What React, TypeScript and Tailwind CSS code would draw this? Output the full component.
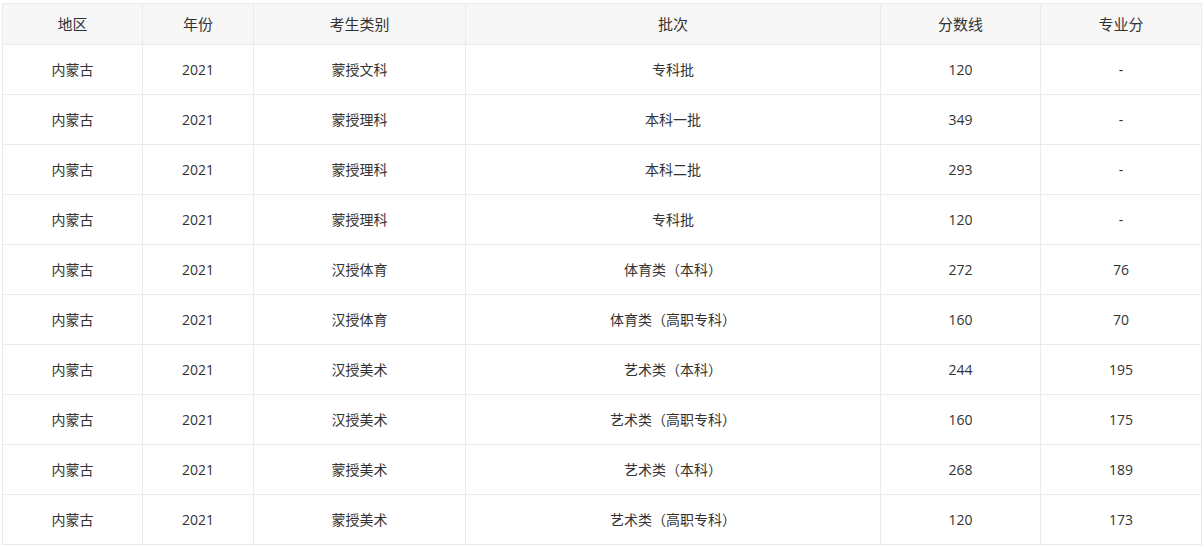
import React from 'react';

const rows = [
  ['内蒙古', '2021', '蒙授文科', '专科批', '120', '-'],
  ['内蒙古', '2021', '蒙授理科', '本科一批', '349', '-'],
  ['内蒙古', '2021', '蒙授理科', '本科二批', '293', '-'],
  ['内蒙古', '2021', '蒙授理科', '专科批', '120', '-'],
  ['内蒙古', '2021', '汉授体育', '体育类（本科）', '272', '76'],
  ['内蒙古', '2021', '汉授体育', '体育类（高职专科）', '160', '70'],
  ['内蒙古', '2021', '汉授美术', '艺术类（本科）', '244', '195'],
  ['内蒙古', '2021', '汉授美术', '艺术类（高职专科）', '160', '175'],
  ['内蒙古', '2021', '蒙授美术', '艺术类（本科）', '268', '189'],
  ['内蒙古', '2021', '蒙授美术', '艺术类（高职专科）', '120', '173'],
];

const headers = ['地区', '年份', '考生类别', '批次', '分数线', '专业分'];
const widths = ['w-[140px]', 'w-[111px]', 'w-[212px]', 'w-[415px]', 'w-[160px]', 'w-[161px]'];

export default function App() {
  return (
    <div className="bg-white pl-[2px] pt-[3px] font-['Open_Sans','Noto_Sans_CJK_SC',sans-serif] text-[#333]">
      <table className="w-[1200px] table-fixed border-collapse">
        <colgroup>
          {widths.map((w, i) => (
            <col key={i} className={w} />
          ))}
        </colgroup>
        <thead>
          <tr className="h-[41px] bg-[#f7f7f7]">
            {headers.map((h) => (
              <th key={h} className="border border-[#ebebeb] text-center text-[15px] font-normal leading-none">
                {h}
              </th>
            ))}
          </tr>
        </thead>
        <tbody>
          {rows.map((r, i) => (
            <tr key={i} className="h-[50px]">
              {r.map((c, j) => (
                <td key={j} className="border border-[#ebebeb] text-center text-[14px] leading-none">
                  {c}
                </td>
              ))}
            </tr>
          ))}
        </tbody>
      </table>
    </div>
  );
}
